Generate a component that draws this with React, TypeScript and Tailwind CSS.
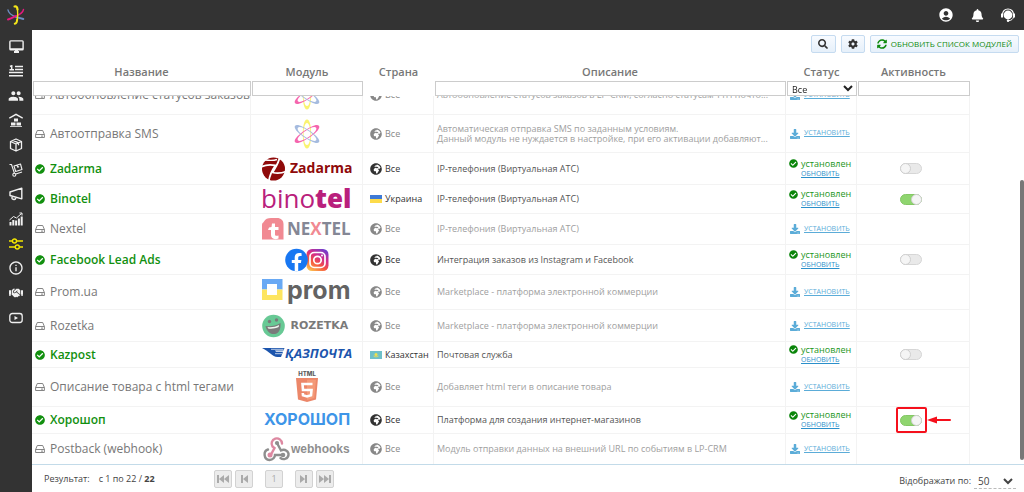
import { useLayoutEffect, useRef, useState, type ReactNode } from "react";
import {
  FaBell,
  FaCheckCircle,
  FaCog,
  FaDownload,
  FaGlobeAfrica,
  FaHandshake,
  FaSearch,
  FaSyncAlt,
} from "react-icons/fa";
import { MdAccountCircle, MdInfoOutline, MdPeople } from "react-icons/md";

const OPEN = "'Open Sans', sans-serif";

const orbit =
  "M13 .5C10 .5 8.800 8 8.800 15S10 29.500 13 29.500 17.200 22 17.200 15 16 .5 13 .5zM13 4C15.200 4 16.400 9 16.400 15S15.200 26 13 26 9.600 21 9.600 15 10.800 4 13 4z";

function AtomMark() {
  return (
    <svg viewBox="0 0 26 30" className="h-[30px] w-[26px] opacity-70" fillRule="evenodd" role="img" aria-label="LP-CRM">
      <path d={orbit} fill="#f8ee35" />
      <path d={orbit} fill="#f2258c" transform="rotate(56 13 15)" />
      <path d={orbit} fill="#7f9fd2" transform="rotate(-56 13 15)" />
    </svg>
  );
}

function BrandMark() {
  return (
    <svg viewBox="0 0 18 20" className="h-5 w-[18px]" fill="none" strokeLinecap="round" aria-hidden="true">
      <path d="M1 5C1.500 8 5 10.500 9 12" stroke="#6c8ec4" strokeWidth="1.400" />
      <path d="M9.500 12.200L16.300 14" stroke="#6c8ec4" strokeWidth="1.900" />
      <path d="M16.500 4.500C16 7 13 9.500 9 11" stroke="#e6197f" strokeWidth="1.400" />
      <path d="M8.500 11.200C6 12.500 3 14 1 14.500" stroke="#e6197f" strokeWidth="2" />
      <path d="M7.600 1.500C9.500 1 10.300 2.500 10.500 4.500" stroke="#f5e61a" strokeWidth="2.200" />
      <path d="M10.500 4.500c.4 4 .2 8-.3 10.500" stroke="#f5e61a" strokeWidth="1.400" />
      <path d="M10.200 14.500c-.2 2.500-.9 4-2.400 4.200" stroke="#f5e61a" strokeWidth="2" />
    </svg>
  );
}

function ZadarmaLogo() {
  return (
    <svg viewBox="0 0 90 26" className="h-[26px] w-[90px]" role="img" aria-label="Zadarma">
      <circle cx="11.500" cy="13" r="11.500" fill="#8f0a0a" />
      <path d="M-1 11c5-2.500 10-2.500 14.500-1.500C10 14 7.500 19 6.500 27M24 15.500c-5 2-9.500 2-13.500 1C13 12 16.500 8 18 0" fill="none" stroke="#fff" strokeWidth="1.800" />
      <path d="M3 4c4 .500 8 1 12-.500" fill="none" stroke="#fff" strokeWidth="1.400" />
      <text x="28" y="17" fontFamily={OPEN} fontWeight="700" fontSize="14" fill="#8f0a0a">Zadarma</text>
    </svg>
  );
}

function BinotelLogo() {
  return (
    <svg viewBox="0 0 90 24" className="h-6 w-[90px]" role="img" aria-label="Binotel">
      <text x="-1" y="21" fontFamily={OPEN} fontSize="26" fill="#b9207c">
        bino<tspan fontWeight="800">tel</tspan>
      </text>
    </svg>
  );
}

function NextelLogo() {
  return (
    <svg viewBox="0 0 90 24" className="h-6 w-[90px] opacity-60" role="img" aria-label="Nextel">
      <path d="M0 22.500V8c0-2 1-2 2-3.500C3 2 6 1 9 1h6c4 0 6.500 2.500 6.500 6v15.500z" fill="#e83b4a" />
      <path d="M10 6.500h3v3.500h3.500v3H13v4.500c0 1.300 1.200 1.500 3.500 1v3c-4 1.500-7.500 .300-7.500-3.500v-5H6l1-2.500 2.500-.500z" fill="#fff" />
      <text x="25" y="18" fontFamily={OPEN} fontWeight="700" fontSize="17" fill="#33384f">
        NE<tspan fill="#e83b4a">X</tspan>TEL
      </text>
    </svg>
  );
}

function MetaLogo() {
  return (
    <svg viewBox="0 0 44 24" className="h-6 w-11" role="img" aria-label="Facebook, Instagram">
      <defs>
        <linearGradient id="ig" x1="0.200" y1="1" x2="0.800" y2="0">
          <stop offset="0" stopColor="#fdc04e" />
          <stop offset="0.350" stopColor="#f5543f" />
          <stop offset="0.650" stopColor="#d32d8b" />
          <stop offset="1" stopColor="#6b3fd0" />
        </linearGradient>
      </defs>
      <rect x="21.500" y="1" width="22" height="22" rx="5.500" fill="url(#ig)" />
      <rect x="25" y="4.500" width="15" height="15" rx="4.200" fill="none" stroke="#fff" strokeWidth="1.700" />
      <circle cx="32.500" cy="12" r="3.700" fill="none" stroke="#fff" strokeWidth="1.700" />
      <circle cx="37" cy="7.500" r="1" fill="#fff" />
      <circle cx="11.500" cy="12" r="11.300" fill="#1877f2" />
      <path d="M9.700 23.200v-8.100H6.800V12h2.900V9.500c0-2.900 1.700-4.500 4.300-4.500 1.300 0 2.600.200 2.600.200V8h-1.500c-1.400 0-1.900.900-1.900 1.800V12h3.200l-.500 3.100h-2.700v8.100z" fill="#fff" />
    </svg>
  );
}

function PromLogo() {
  return (
    <svg viewBox="0 0 90 30" className="h-[30px] w-[90px] opacity-70" role="img" aria-label="Prom">
      <path d="M0 2h20.500v10.500H15V7H5v5.500H0z" fill="#2b86f0" />
      <path d="M0 12.500h5V18h10v-5.500h5.500V23H0z" fill="#fddb1d" />
      <text x="25" y="22" fontFamily="Inter, sans-serif" fontWeight="700" fontSize="25" fill="#222">prom</text>
    </svg>
  );
}

function RozetkaLogo() {
  return (
    <svg viewBox="0 0 90 26" className="h-[26px] w-[90px] opacity-60" role="img" aria-label="Rozetka">
      <circle cx="11.500" cy="13" r="11.300" fill="#04a650" />
      <path d="M3.500 13c5 .800 10 0 15-3 .5 6-1.500 10.500-6 11S4.500 18 3.500 13z" fill="#222" />
      <path d="M5.500 14c4 .500 8 0 11.500-2l-.300 2c-3 1.500-7 2-10.500 1.500z" fill="#e8f5e8" />
      <circle cx="7.500" cy="8.500" r="1.700" fill="#222" />
      <circle cx="14.500" cy="7" r="1.700" fill="#222" />
      <text x="28.500" y="16" fontFamily="'DejaVu Sans', sans-serif" fontWeight="700" fontSize="11" fill="#222">ROZETKA</text>
    </svg>
  );
}

function KazpostLogo() {
  return (
    <svg viewBox="0 0 90 20" className="h-5 w-[90px]" role="img" aria-label="Қазпочта">
      <path d="M0 3h22.500l-1 2.500h-8.500l1 1.300h7l-2 5.200h-3.500C10 12 8 6.500 0 3z" fill="#1c55ad" />
      <path d="M9 4.300h12.500M13 8.700h7" stroke="#fff" strokeWidth=".7" />
      <text x="23" y="13" fontFamily={OPEN} fontWeight="700" fontStyle="italic" fontSize="13" fill="#1c55ad">ҚАЗПОЧТА</text>
    </svg>
  );
}

function HtmlLogo() {
  return (
    <svg viewBox="0 0 24 34" className="h-[34px] w-6 opacity-70" role="img" aria-label="HTML5">
      <text x="12" y="6" textAnchor="middle" fontFamily="Inter, sans-serif" fontWeight="800" fontSize="6" fill="#111">HTML</text>
      <path d="M1 8h22l-2 21.500L12 32l-9-2.500z" fill="#e4552b" />
      <path d="M12 9.800h9l-1.700 18.300L12 30z" fill="#f0703f" />
      <path d="M17.500 14H7.500l.5 6h8.500l-.5 5.200-4 1.300-4-1.300-.2-2.200" fill="none" stroke="#fff" strokeWidth="2.600" />
    </svg>
  );
}

function HoroshopLogo() {
  return (
    <svg viewBox="0 0 90 20" className="h-5 w-[90px]" role="img" aria-label="Хорошоп">
      <text x="2" y="15" fontFamily="Inter, sans-serif" fontWeight="700" fontSize="16" fill="#3e95e8">ХОРОШОП</text>
    </svg>
  );
}

function WebhooksLogo() {
  return (
    <svg viewBox="0 0 90 26" className="h-[26px] w-[90px] opacity-60" role="img" aria-label="webhooks">
      <g fill="none" strokeWidth="2.400" strokeLinecap="round">
        <path d="M10.500 10.500A5.200 5.200 0 1 1 20 7.500M10.500 10.500l2 1.500-3.500 6.500" stroke="#c73a63" />
        <path d="M15 7l4 7.500c4-2 8 1 7.500 4.500s-5 5.500-8 3" stroke="#444" />
        <path d="M6 13.500C1 15 1.500 23.500 7.500 24c3.500 0 5.500-3 5.500-5h8" stroke="#444" />
      </g>
      <circle cx="15" cy="7" r="2.100" fill="#444" />
      <circle cx="21" cy="19" r="2.300" fill="#444" />
      <circle cx="8" cy="19" r="2.500" fill="#c73a63" />
      <text x="29" y="17" fontFamily="'Liberation Sans', sans-serif" fontWeight="700" fontSize="12" fill="#444">webhooks</text>
    </svg>
  );
}

function FlagUkraine() {
  return (
    <svg viewBox="0 0 12 8" className="h-2 w-3" aria-hidden="true">
      <path d="M0 0h12v4H0z" fill="#3f7ad6" />
      <path d="M0 4h12v4H0z" fill="#fddb4a" />
    </svg>
  );
}

function FlagKazakhstan() {
  return (
    <svg viewBox="0 0 12 8" className="h-2 w-3" aria-hidden="true">
      <path d="M0 0h12v8H0z" fill="#6fc0c9" />
      <circle cx="6" cy="3.500" r="1.500" fill="#f3e04a" />
      <path d="M3.500 5q2.500 2 5 0" stroke="#f3e04a" fill="none" strokeWidth=".8" />
    </svg>
  );
}

function DriveIcon() {
  return (
    <svg viewBox="0 0 10 10" className="size-[10px]" fill="none" stroke="currentColor" strokeWidth=".9" strokeLinejoin="round" aria-hidden="true">
      <path d="M.6 5.500L2.300 1.500h5.400l1.700 4v3H.6zM.6 5.500h8.800" />
      <path d="M6 7.100h2" />
    </svg>
  );
}

const logos: Record<string, ReactNode> = {
  atom: <AtomMark />,
  zadarma: <ZadarmaLogo />,
  binotel: <BinotelLogo />,
  nextel: <NextelLogo />,
  meta: <MetaLogo />,
  prom: <PromLogo />,
  rozetka: <RozetkaLogo />,
  kazpost: <KazpostLogo />,
  html: <HtmlLogo />,
  horoshop: <HoroshopLogo />,
  webhooks: <WebhooksLogo />,
};

type Row = {
  name: string;
  logo: string;
  country: "Все" | "Украина" | "Казахстан";
  text: string[];
  installed?: boolean;
  active?: boolean;
  marked?: boolean;
  height: string;
};

const rows: Row[] = [
  { name: "Автообновление статусов заказов", logo: "atom", country: "Все", text: ["Автообновление статусов заказов в LP-CRM, согласно статусам ТТН почто..."], height: "h-[39px]" },
  { name: "Автоотправка SMS", logo: "atom", country: "Все", text: ["Автоматическая отправка SMS по заданным условиям.", "Данный модуль не нуждается в настройке, при его активации добавляют..."], height: "h-[38px]" },
  { name: "Zadarma", logo: "zadarma", country: "Все", text: ["IP-телефония (Виртуальная АТС)"], installed: true, height: "h-8" },
  { name: "Binotel", logo: "binotel", country: "Украина", text: ["IP-телефония (Виртуальная АТС)"], installed: true, active: true, height: "h-[29px]" },
  { name: "Nextel", logo: "nextel", country: "Все", text: ["IP-телефония (Виртуальная АТС)"], height: "h-[31px]" },
  { name: "Facebook Lead Ads", logo: "meta", country: "Все", text: ["Интеграция заказов из Instagram и Facebook"], installed: true, height: "h-[30px]" },
  { name: "Prom.ua", logo: "prom", country: "Все", text: ["Marketplace - платформа электронной коммерции"], height: "h-[35px]" },
  { name: "Rozetka", logo: "rozetka", country: "Все", text: ["Marketplace - платформа электронной коммерции"], height: "h-8" },
  { name: "Kazpost", logo: "kazpost", country: "Казахстан", text: ["Почтовая служба"], installed: true, height: "h-[26px]" },
  { name: "Описание товара с html тегами", logo: "html", country: "Все", text: ["Добавляет html теги в описание товара"], height: "h-[39px]" },
  { name: "Хорошоп", logo: "horoshop", country: "Все", text: ["Платформа для создания интернет-магазинов"], installed: true, active: true, marked: true, height: "h-[27px]" },
  { name: "Postback (webhook)", logo: "webhooks", country: "Все", text: ["Модуль отправки данных на внешний URL по событиям в LP-CRM"], height: "h-[31px]" },
];

function Toggle({ label, initial }: { label: string; initial: boolean }) {
  const [on, setOn] = useState(initial);
  return (
    <input
      type="checkbox"
      role="switch"
      aria-label={label}
      checked={on}
      onChange={() => setOn(!on)}
      className="block h-[11px] w-[22px] cursor-pointer appearance-none rounded-full border border-[#d6d6d6] bg-[#e9e9e9] before:-mt-px before:-ml-px before:block before:size-[11px] before:rounded-full before:border before:border-[#cfcfcf] before:bg-[#f5f5f5] checked:border-[#84c765] checked:bg-[#8fd56f] checked:before:ml-[10px]"
    />
  );
}

function Country({ row }: { row: Row }) {
  return (
    <span className={`flex items-center gap-[3px] ${row.installed ? "text-[#333]" : "text-[#888]"}`}>
      {row.country === "Все" && <FaGlobeAfrica className="size-3 shrink-0" />}
      {row.country === "Украина" && <FlagUkraine />}
      {row.country === "Казахстан" && <FlagKazakhstan />}
      {row.country}
    </span>
  );
}

function Status({ row }: { row: Row }) {
  if (row.installed) {
    return (
      <div className="grid grid-cols-[9px_1fr] items-center gap-x-[3px] leading-[10px]">
        <FaCheckCircle className="size-[9px] text-[#0a850a]" />
        <span className="text-[#1c961c]">установлен</span>
        <a href="#update" className="col-start-2 text-[7px] text-[#2b8fca] underline">ОБНОВИТЬ</a>
      </div>
    );
  }
  return (
    <div className="flex items-center gap-1 pl-px text-[#5bacd8]">
      <FaDownload className="size-[10px] shrink-0" />
      <a href="#install" className="text-[7px] underline">УСТАНОВИТЬ</a>
    </div>
  );
}

const cell = "border-r border-t border-[#f3f3f3] p-0";

function ModuleRow({ row }: { row: Row }) {
  return (
    <tr className={row.height}>
      <td className={cell}>
        <div className={`flex items-center gap-[5px] pl-[3px] text-xs leading-4 whitespace-nowrap ${row.installed ? "font-semibold text-[#12900f]" : "text-[#777]"}`}>
          {row.installed ? <FaCheckCircle className="size-[10px]" /> : <DriveIcon />}
          <span>{row.name}</span>
        </div>
      </td>
      <td className={cell}>
        <div className="-my-1 flex justify-center">{logos[row.logo]}</div>
      </td>
      <td className={`${cell} pl-[7px]`}>
        <Country row={row} />
      </td>
      <td className={`${cell} px-[3px] leading-[10px] ${row.installed ? "text-[#555]" : "text-[#a0a0a0]"}`}>
        {row.text.map((line) => (
          <p key={line}>{line}</p>
        ))}
      </td>
      <td className={`${cell} px-[3px]`}>
        <Status row={row} />
      </td>
      <td className={cell}>
        {row.installed && (
          <div className="flex justify-center pr-1">
            <div className="relative">
              <Toggle label={row.name} initial={!!row.active} />
              {row.marked && (
                <svg viewBox="0 0 56 26" className="pointer-events-none absolute -top-2 -left-1 h-[26px] w-14 max-w-none" fill="none" aria-hidden="true">
                  <rect x="1" y="1" width="29" height="24" rx="1" stroke="#f5101c" strokeWidth="2" />
                  <path d="M37 13h17" stroke="#f5101c" strokeWidth="2" strokeLinecap="round" />
                  <path d="M31 13l10-3.500v7z" fill="#f5101c" />
                </svg>
              )}
            </div>
          </div>
        )}
      </td>
    </tr>
  );
}

const navItems: { label: string; icon: ReactNode; current?: boolean }[] = [
  {
    label: "Рабочий стол",
    icon: (
      <svg viewBox="0 0 15 13" className="h-[13px] w-[15px]" fill="none" stroke="currentColor" strokeWidth="1.400">
        <rect x=".9" y=".9" width="13.200" height="8.800" rx=".8" />
        <path d="M1 9.200h13M5 12h5" strokeWidth="1.800" />
        <path d="M7.500 9v3" strokeWidth="3" />
      </svg>
    ),
  },
  {
    label: "Заказы",
    icon: (
      <svg viewBox="0 0 14 12" className="h-3 w-3.5" fill="none" stroke="currentColor" strokeWidth="1.500">
        <path d="M6 1.500h8M6 4.500h8M0 7.500h14M0 10.700h14M.5 4.800H5M1 1.500l1.700-.7v4" />
      </svg>
    ),
  },
  { label: "Клиенты", icon: <MdPeople className="size-4" /> },
  {
    label: "Склад",
    icon: (
      <svg viewBox="0 0 14 14" className="size-3.5" fill="currentColor">
        <path d="M7 .5l7 4-.6 1.300L7 2.300.6 5.800 0 4.500z" />
        <path d="M5 5.500h4v3H5zM2 9.500h4.500v3H2zM7.500 9.500H12v3H7.500z" />
        <path d="M1 13h12v.8H1z" />
      </svg>
    ),
  },
  {
    label: "Товары",
    icon: (
      <svg viewBox="0 0 14 14" className="size-3.5" fill="none" stroke="currentColor" strokeWidth="1.300" strokeLinejoin="round">
        <path d="M7 1l5.500 2.500v7L7 13l-5.500-2.500v-7zM1.500 3.500L7 6l5.500-2.500M7 6v7M4 2.300l5.500 2.500v2.500" />
      </svg>
    ),
  },
  {
    label: "Доставка",
    icon: (
      <svg viewBox="0 0 14 14" className="size-3.5" fill="none" stroke="currentColor" strokeWidth="1.100" strokeLinejoin="round">
        <path d="M.5 1.500h2l3 9M6.800 11l6.200-2" />
        <path d="M5 3l6.500-2 1.500 5.500-6.300 2zM8 2.200l.8 2 1.200-.7" />
        <circle cx="5.300" cy="11.700" r="1.500" />
      </svg>
    ),
  },
  {
    label: "Маркетинг",
    icon: (
      <svg viewBox="0 0 14 14" className="size-3.5" fill="none" stroke="currentColor" strokeWidth="1.400" strokeLinejoin="round">
        <path d="M1 5L12.800 1.200v10.600L1 8.500zM3 9v2.500c0 1 3.500 1.500 3.500.3V10.200" />
      </svg>
    ),
  },
  {
    label: "Статистика",
    icon: (
      <svg viewBox="0 0 14 14" className="size-3.5" fill="currentColor">
        <path d="M.5 10h2v3.500h-2zM3.300 8h2v5.500h-2zM6.100 8.500h2v5h-2zM8.900 6.500h2v7h-2zM11.700 4.500h2v9h-2z" />
        <path d="M.5 8l4-3.500 3 1.500 5-4.500M10.500 1h2.500v2.500" fill="none" stroke="currentColor" />
      </svg>
    ),
  },
  {
    label: "Настройки",
    current: true,
    icon: (
      <svg viewBox="0 0 14 12" className="h-3 w-3.5" fill="none" stroke="currentColor" strokeWidth="1.400">
        <path d="M0 3h3.500M7.500 3H14M0 9h6M10.500 9H14" />
        <circle cx="5.500" cy="3" r="2" />
        <circle cx="8.300" cy="9" r="2" />
      </svg>
    ),
  },
  { label: "Информация", icon: <MdInfoOutline className="size-4" /> },
  { label: "Партнёры", icon: <FaHandshake className="size-3.5" /> },
  {
    label: "Видео",
    icon: (
      <svg viewBox="0 0 14 12" className="h-3 w-3.5" fill="none" stroke="currentColor" strokeWidth="1.300">
        <rect x=".8" y="1.500" width="12.400" height="9" rx="2.500" />
        <path d="M5.500 4v4l3.500-2z" fill="currentColor" stroke="none" />
      </svg>
    ),
  },
];

function HeadsetIcon() {
  return (
    <svg viewBox="0 0 14 14" className="size-3.5" fill="none" aria-hidden="true">
      <circle cx="7" cy="7" r="4.400" fill="#fff" />
      <path d="M1.500 7C1 -1 13 -1 12.500 7" stroke="#fff" strokeWidth="1.200" />
      <path d="M0 5.500h2v4H0zM12 5.500h2v4h-2z" fill="#fff" />
      <path d="M12.500 9c-.5 2-2 3.500-5 3.800" stroke="#fff" />
      <circle cx="7" cy="12.700" r="1.200" fill="#fff" />
    </svg>
  );
}

type PageKind = "first" | "prev" | "next" | "last";
const pagePaths: Record<PageKind, string> = {
  first: "M0 1h2v8H0zM7 1v8L2 5zM12 1v8L7 5z",
  prev: "M3 1h2v8H3zM10 1v8L5 5z",
  next: "M7 1h2v8H7zM2 1v8l5-4z",
  last: "M10 1h2v8h-2zM5 1v8l5-4zM0 1v8l5-4z",
};

function PageButton({ kind, label }: { kind: PageKind; label: string }) {
  return (
    <button type="button" aria-label={label} className="flex size-[18px] items-center justify-center rounded-xs border border-[#d2d2d2] bg-[#ececec] text-[#aaa]">
      <svg viewBox="0 0 12 10" className="h-2.5 w-3" fill="currentColor" aria-hidden="true">
        <path d={pagePaths[kind]} />
      </svg>
    </button>
  );
}

const toolButton = "flex h-[18px] items-center justify-center rounded-xs border border-[#c5dbf0] bg-linear-to-b from-[#f8fbff] to-[#e6f0fa]";
const field = "block h-[15px] w-full border border-[#ccc] bg-white px-1";

export default function App() {
  const scroller = useRef<HTMLDivElement>(null);

  useLayoutEffect(() => {
    const el = scroller.current;
    if (el) el.scrollTop = el.scrollHeight;
  }, []);

  return (
    <div className="flex h-screen flex-col bg-white font-['Open_Sans',sans-serif] text-[9px] text-[#444]">
      <header className="flex h-[30px] shrink-0 items-center justify-between bg-[#333] pr-[9px] pl-[7px] text-white">
        <a href="#home" aria-label="LP-CRM"><BrandMark /></a>
        <div className="flex items-center gap-[17px]">
          <button type="button" aria-label="Профиль"><MdAccountCircle className="size-4" /></button>
          <button type="button" aria-label="Уведомления"><FaBell className="size-[13px]" /></button>
          <button type="button" aria-label="Поддержка"><HeadsetIcon /></button>
        </div>
      </header>

      <div className="flex min-h-0 flex-1">
        <nav className="w-8 shrink-0 bg-[#333] pt-2">
          <ul className="flex flex-col">
            {navItems.map((item, i) => (
              <li key={item.label} className={`flex justify-center ${i % 3 === 2 ? "h-6" : "h-[25px]"}`}>
                <a href="#section" aria-label={item.label} className={`flex size-4 items-center justify-center ${item.current ? "text-[#f5e800]" : "text-[#f0f0f0]"}`}>
                  {item.icon}
                </a>
              </li>
            ))}
          </ul>
        </nav>

        <main className="relative flex min-w-0 flex-1 flex-col">
          <div className="flex h-8 shrink-0 justify-end gap-[5px] pt-[5px] pr-[5px]">
            <button type="button" aria-label="Поиск" className={`${toolButton} w-[25px]`}><FaSearch className="size-[10px] text-[#333]" /></button>
            <button type="button" aria-label="Параметры" className={`${toolButton} w-6`}><FaCog className="size-[10px] text-[#333]" /></button>
            <button type="button" className={`${toolButton} gap-1 px-1.5 text-[8px] text-[#0f8a0f]`}>
              <FaSyncAlt className="size-[10px]" />
              ОБНОВИТЬ СПИСОК МОДУЛЕЙ
            </button>
          </div>

          <div ref={scroller} className="min-h-0 flex-1 overflow-y-auto pr-[54px] [scrollbar-width:none]">
            <table className="w-full table-fixed border-separate border-spacing-0">
              <colgroup>
                <col className="w-[219px]" />
                <col className="w-[112px]" />
                <col className="w-[71px]" />
                <col />
                <col className="w-[71px]" />
                <col className="w-[113px]" />
              </colgroup>
              <thead className="sticky top-0 z-10 bg-white text-[11px] leading-4 text-[#777]">
                <tr className="h-[19px]">
                  {["Название", "Модуль", "Страна", "Описание", "Статус", "Активность"].map((title) => (
                    <th key={title} scope="col" className="p-0 pt-0.5 align-top font-semibold">{title}</th>
                  ))}
                </tr>
                <tr className="h-[15px]">
                  <td className="p-0 pl-px"><input aria-label="Название" className={field} /></td>
                  <td className="p-0 pl-px"><input aria-label="Модуль" className={field} /></td>
                  <td className="p-0" />
                  <td className="p-0 pl-px"><input aria-label="Описание" className={field} /></td>
                  <td className="p-0 pl-px">
                    <select aria-label="Статус" className="block h-[15px] w-full border border-[#ccc] bg-white p-0 text-[9px] leading-3 text-[#222]">
                      <option>Все</option>
                    </select>
                  </td>
                  <td className="p-0 pl-px"><input aria-label="Активность" className={field} /></td>
                </tr>
              </thead>
              <tbody>
                {rows.map((row) => (
                  <ModuleRow key={row.name} row={row} />
                ))}
              </tbody>
            </table>
          </div>
          <div className="absolute top-[150px] right-0 bottom-8 w-1 rounded-full bg-[#777]" aria-hidden="true" />

          <footer className="flex h-7 shrink-0 items-start justify-between border-t border-[#c3dbe9] pr-2 pl-3">
            <div className="flex items-center pt-[5px]">
              <p className="w-[170px]">
                Результат:<span className="ml-[9px]">с 1 по 22 / <b>22</b></span>
              </p>
              <div className="flex items-center gap-3">
                <div className="flex gap-[3px]">
                  <PageButton kind="first" label="Первая" />
                  <PageButton kind="prev" label="Предыдущая" />
                </div>
                <button type="button" className="size-[18px] rounded-xs border border-[#d2d2d2] bg-[#ececec] text-[#aaa]">1</button>
                <div className="flex gap-[3px]">
                  <PageButton kind="next" label="Следующая" />
                  <PageButton kind="last" label="Последняя" />
                </div>
              </div>
            </div>
            <label className="flex items-center gap-[3px] pt-2">
              Відображати по:
              <select className="h-4 w-[42px] border-b border-dashed border-[#bbb] bg-white p-0 text-[10px]">
                <option>50</option>
              </select>
            </label>
          </footer>
        </main>
      </div>
    </div>
  );
}
